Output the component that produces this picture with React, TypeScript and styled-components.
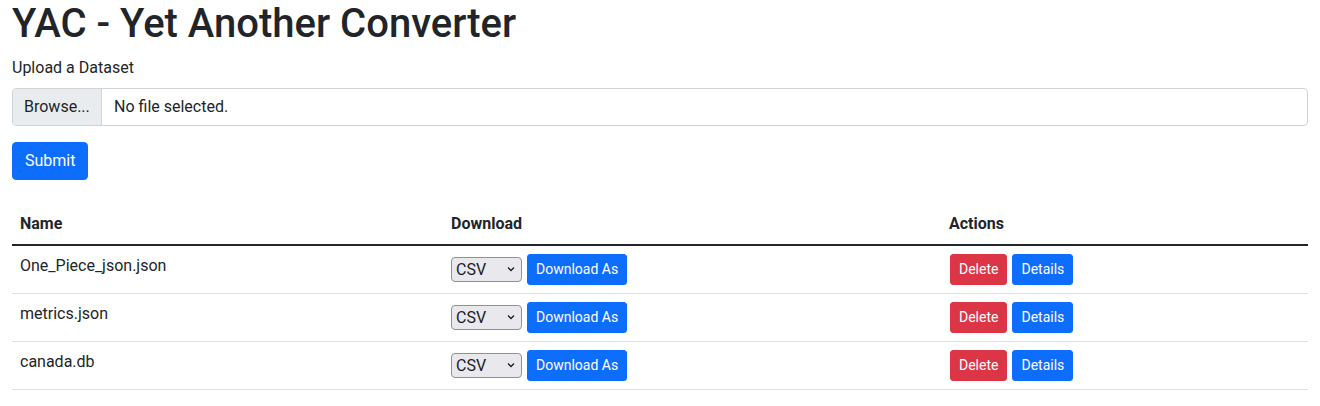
import React from "react";
import styled, { createGlobalStyle } from "styled-components";

const GlobalStyle = createGlobalStyle`
  *, *::before, *::after { box-sizing: border-box; }
  body {
    margin: 0;
    font-family: Roboto, "Noto Sans", "Liberation Sans", sans-serif;
    font-size: 16px;
    line-height: 1.5;
    color: #212529;
    background: #fff;
  }
`;

const Page = styled.div`
  padding: 0 12px;
`;

const Title = styled.h1`
  margin: 0 0 8px;
  font-size: 40px;
  font-weight: 500;
  line-height: 1.2;
`;

const Label = styled.label`
  display: block;
  margin-bottom: 8px;
`;

const FileField = styled.div`
  display: flex;
  align-items: stretch;
  height: 38px;
  border: 1px solid #ced4da;
  border-radius: 4px;
  overflow: hidden;
  background: #fff;
`;

const BrowseButton = styled.span`
  display: flex;
  align-items: center;
  width: 89px;
  padding: 0 11px;
  background: #e9ecef;
  border-right: 1px solid #ced4da;
  white-space: nowrap;
`;

const FileName = styled.span`
  display: flex;
  align-items: center;
  padding: 0 12px;
`;

const Button = styled.button<{ $variant?: "primary" | "danger"; $small?: boolean }>`
  font-family: inherit;
  display: inline-block;
  border: 1px solid ${(p) => (p.$variant === "danger" ? "#dc3545" : "#0d6efd")};
  background: ${(p) => (p.$variant === "danger" ? "#dc3545" : "#0d6efd")};
  color: #fff;
  font-size: ${(p) => (p.$small ? "14px" : "16px")};
  line-height: ${(p) => (p.$small ? "21px" : "24px")};
  padding: ${(p) => (p.$small ? "4px 8px" : "6px 12px")};
  border-radius: ${(p) => (p.$small ? "3px" : "4px")};
  cursor: pointer;
`;

const SubmitRow = styled.div`
  margin-top: 16px;
`;

const Table = styled.table`
  width: 100%;
  margin-top: 24px;
  border-collapse: collapse;
`;

const HeadCell = styled.th<{ $width: number }>`
  width: ${(p) => p.$width}px;
  text-align: left;
  font-weight: 700;
  padding: 8px;
  border-bottom: 2px solid #212529;
  vertical-align: bottom;
`;

const Row = styled.tr`
  border-bottom: 1px solid #dee2e6;
`;

const Cell = styled.td`
  padding: 8px;
  vertical-align: top;
`;

const Controls = styled.div<{ $indent?: number }>`
  display: flex;
  align-items: center;
  gap: 5px;
  padding-left: ${(p) => p.$indent ?? 0}px;
`;

const SelectWrap = styled.span`
  position: relative;
  display: inline-flex;
`;

const Select = styled.select`
  appearance: none;
  -webkit-appearance: none;
  width: 71px;
  height: 25px;
  padding: 0 4px;
  font-family: inherit;
  font-size: 16px;
  line-height: 23px;
  color: #1b1b1f;
  background: #e9e9ed;
  border: 1px solid #8f8f9d;
  border-radius: 4px;
`;

const Chevron = styled.svg`
  position: absolute;
  right: 7px;
  top: 9px;
  width: 8px;
  height: 6px;
  pointer-events: none;
`;

const files = ["One_Piece_json.json", "metrics.json", "canada.db"];

export default function App() {
  return (
    <Page>
      <GlobalStyle />
      <Title>YAC - Yet Another Converter</Title>
      <Label htmlFor="file">Upload a Dataset</Label>
      <FileField id="file">
        <BrowseButton>Browse...</BrowseButton>
        <FileName>No file selected.</FileName>
      </FileField>
      <SubmitRow>
        <Button $variant="primary">Submit</Button>
      </SubmitRow>
      <Table>
        <thead>
          <tr>
            <HeadCell $width={431}>Name</HeadCell>
            <HeadCell $width={498}>Download</HeadCell>
            <HeadCell $width={367}>Actions</HeadCell>
          </tr>
        </thead>
        <tbody>
          {files.map((f) => (
            <Row key={f}>
              <Cell>{f}</Cell>
              <Cell>
                <Controls>
                  <SelectWrap>
                    <Select defaultValue="CSV">
                      <option>CSV</option>
                      <option>JSON</option>
                      <option>SQLite</option>
                    </Select>
                    <Chevron viewBox="0 0 8 6">
                      <path d="M1 1.5 L4 4.5 L7 1.5" fill="none" stroke="#1b1b1f" strokeWidth="1.3" />
                    </Chevron>
                  </SelectWrap>
                  <Button $variant="primary" $small>Download As</Button>
                </Controls>
              </Cell>
              <Cell>
                <Controls $indent={1}>
                  <Button $variant="danger" $small>Delete</Button>
                  <Button $variant="primary" $small>Details</Button>
                </Controls>
              </Cell>
            </Row>
          ))}
        </tbody>
      </Table>
    </Page>
  );
}
